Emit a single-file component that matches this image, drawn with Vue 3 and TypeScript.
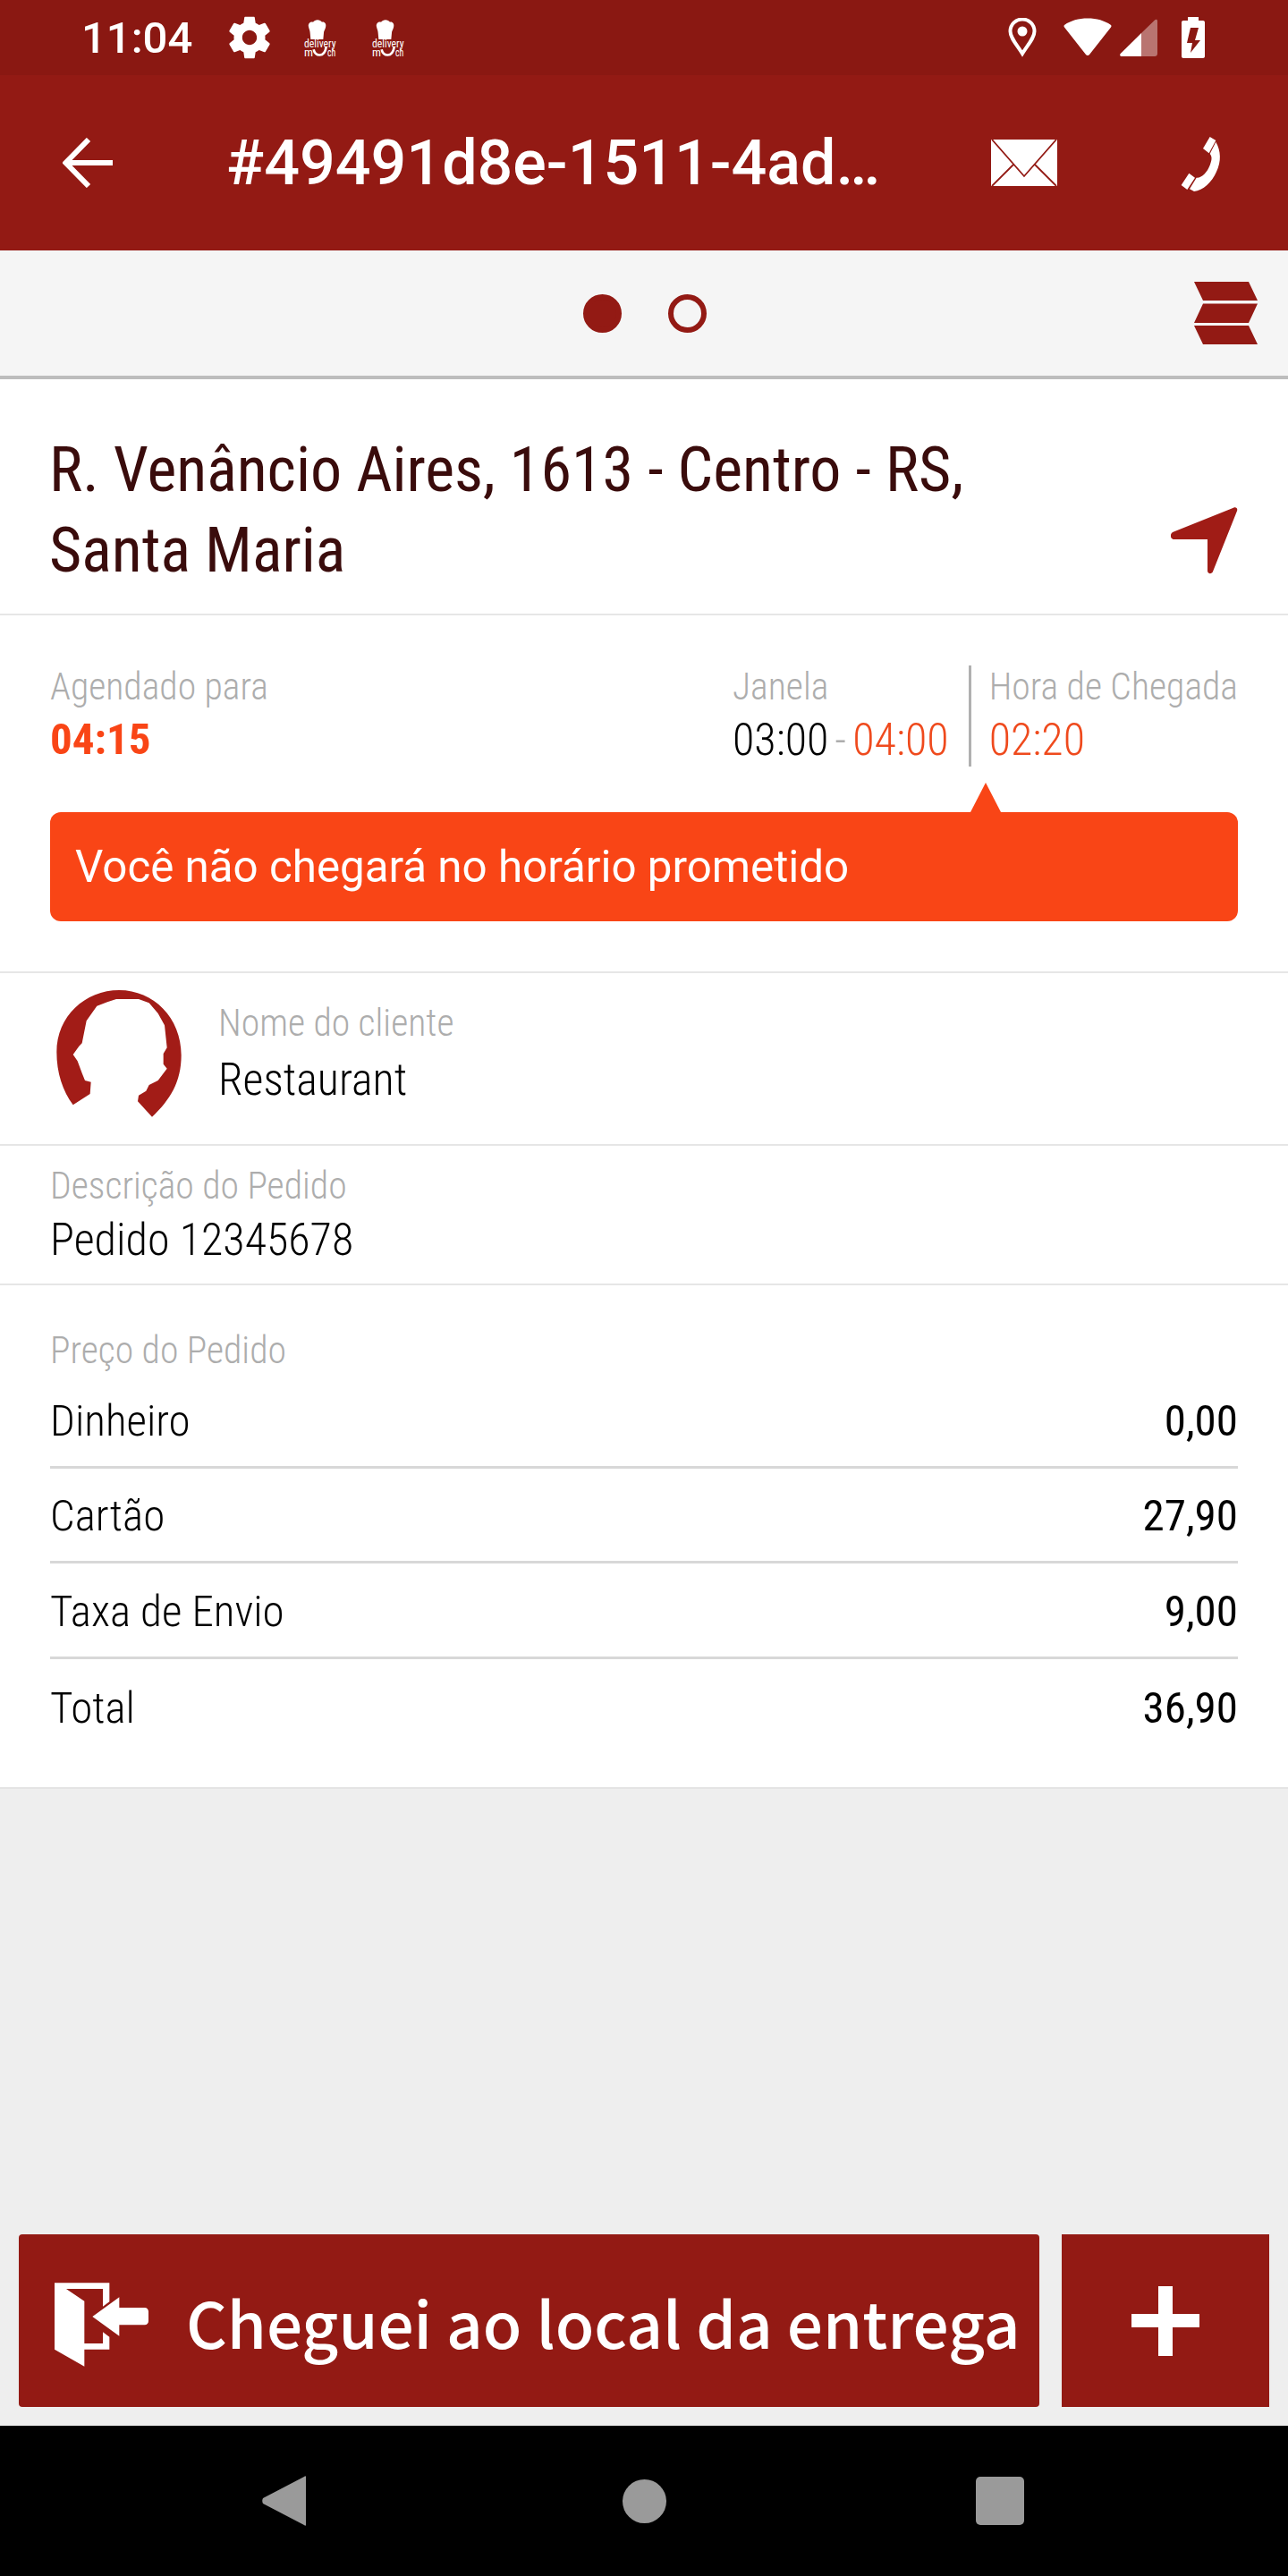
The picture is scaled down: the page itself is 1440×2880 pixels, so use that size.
<template>
  <div class="screen">
    <!-- status bar -->
    <div class="status">
      <span class="time">11:04</span>
      <svg class="gear" viewBox="0 0 24 24" width="56" height="56">
        <path fill="#fff" d="M19.43 12.98c.04-.32.07-.64.07-.98s-.03-.66-.07-.98l2.11-1.65c.19-.15.24-.42.12-.64l-2-3.46c-.12-.22-.39-.3-.61-.22l-2.49 1c-.52-.4-1.08-.73-1.69-.98l-.38-2.65C14.46 2.18 14.25 2 14 2h-4c-.25 0-.46.18-.49.42l-.38 2.65c-.61.25-1.17.59-1.69.98l-2.49-1c-.23-.09-.49 0-.61.22l-2 3.46c-.13.22-.07.49.12.64l2.11 1.65c-.04.32-.07.65-.07.98s.03.66.07.98l-2.11 1.65c-.19.15-.24.42-.12.64l2 3.46c.12.22.39.3.61.22l2.49-1c.52.4 1.08.73 1.69.98l.38 2.65c.03.24.24.42.49.42h4c.25 0 .46-.18.49-.42l.38-2.65c.61-.25 1.17-.59 1.69-.98l2.49 1c.23.09.49 0 .61-.22l2-3.46c.12-.22.07-.49-.12-.64l-2.11-1.65zM12 15.5c-1.93 0-3.5-1.57-3.5-3.5s1.57-3.5 3.5-3.5 3.5 1.57 3.5 3.5-1.57 3.5-3.5 3.5z"/>
      </svg>
      <svg v-for="n in 2" :key="n" class="dm" viewBox="0 0 180 168" width="60" height="56">
        <path fill="#fff" d="M45 48c-3-12 7-18 15-16 6-10 24-10 30 0 8-2 16 6 12 18-2 8-6 12-6 18l-2 22H52l-2-22c0-6-3-12-5-20z"/>
        <text x="30" y="118" textLength="107" lengthAdjust="spacingAndGlyphs" class="dm-text">delivery</text>
        <text x="30" y="146" textLength="30" lengthAdjust="spacingAndGlyphs" class="dm-text">m</text>
        <text x="108" y="146" textLength="28" lengthAdjust="spacingAndGlyphs" class="dm-text">ch</text>
        <path fill="none" stroke="#fff" stroke-width="8" d="M62 124c4 24 36 28 42-8"/>
      </svg>
      <div class="status-right">
        <svg viewBox="0 0 32 44" width="32" height="44">
          <path fill="none" stroke="#fff" stroke-width="4" d="M16 40C9 29 2.500 22 2.500 15a13.500 13.500 0 0 1 27 0c0 7-6.500 14-13.500 25z"/>
          <circle cx="16" cy="15" r="5.500" fill="#fff"/>
        </svg>
        <svg class="wifi" viewBox="0 0 54 44" width="54" height="44">
          <path fill="#fff" d="M25 41 1 10.500c-.8-1-.6-2 .3-2.700C8 3 17 .5 27 .5S46 3 52.700 7.800c.9.700 1.100 1.700.3 2.700L29 41c-1 1.400-3 1.400-4 0z"/>
        </svg>
        <svg class="signal" viewBox="0 0 42 42" width="42" height="42">
          <path fill="#fff" fill-opacity=".4" d="M39 1.500c1.300-1.400 3-.9 3 1V39c0 1.700-1.300 3-3 3H24V16z"/>
          <path fill="#fff" d="M24 16v26H2c-1.800 0-2.500-1.700-1.300-2.900z"/>
        </svg>
        <svg class="battery" viewBox="0 0 26 46" width="26" height="46">
          <path fill="#fff" fill-rule="evenodd" d="M7 0h12v4h5c1.100 0 2 .9 2 2v38c0 1.100-.9 2-2 2H2c-1.100 0-2-.9-2-2V6c0-1.100.9-2 2-2h5zM10 12h9l-4 14h6L10 40l2-11H6z"/>
        </svg>
      </div>
    </div>

    <!-- toolbar -->
    <div class="toolbar">
      <svg class="back" viewBox="0 0 56 56" width="56" height="56">
        <path fill="none" stroke="#fff" stroke-width="6" d="M56 28H4M29 2 3.500 28 29 54"/>
      </svg>
      <span class="title">#49491d8e-1511-4ad…</span>
      <svg class="mail" viewBox="0 0 74 52" width="74" height="52">
        <path fill="#fff" d="M0 0h74v52H0z"/>
        <path fill="none" stroke="#931a14" stroke-width="1.800" d="M1 0 37 41 73 0M1 52l24-24M73 52 49 28"/>
      </svg>
      <svg class="phone" viewBox="0 0 240 240" width="80" height="80">
        <path fill="#fff" d="M158 33l20 12-23 43-20-16zM88 155l20 15-26 40-20-15z"/>
        <path fill="#fff" d="M178 50c17 30 19 65 2 100-15 35-45 63-75 66l-15-8 23-38c17 2 37-20 45-42 8-20 7-30 0-38z"/>
      </svg>
    </div>

    <!-- pager -->
    <div class="pager">
      <span class="dot dot-on"></span>
      <span class="dot"></span>
      <svg class="stack" viewBox="0 0 71 70" width="71" height="70">
        <path fill="#931a14" d="M0 0h61l10 21H10zM10 24.500h61L61 46H0zM0 49h61l10 21H10z"/>
      </svg>
    </div>

    <div class="card">
      <div class="address">
        <div class="address-text cond">R. Venâncio Aires, 1613 - Centro - RS,<br />Santa Maria</div>
        <svg class="nav" viewBox="0 0 75 75" width="75" height="75">
          <path fill="#a01c16" d="M2 28 70 .7c3-1.200 5 .8 4 3.500L47 72c-1 3-6 3-6-1V36H4c-4 0-6-5-2-8z"/>
        </svg>
      </div>

      <div class="times">
        <div class="times-row">
          <div class="t-col">
            <div class="label cond">Agendado para</div>
            <div class="value-strong cond">04:15</div>
          </div>
          <div class="t-col window">
            <div class="label cond">Janela</div>
            <div class="value cond">03:00<span class="sep">-</span><span class="orange">04:00</span></div>
          </div>
          <div class="t-col arrival">
            <div class="label cond">Hora de Chegada</div>
            <div class="value orange cond">02:20</div>
          </div>
        </div>
        <div class="alert">
          <span class="alert-tip"></span>
          Você não chegará no horário prometido
        </div>
      </div>

      <div class="client">
        <svg class="avatar" viewBox="0 70 600 450" width="200" height="150">
          <path fill="#a21c17" d="M155 467C120 420 100 360 100 290 100 170 195 82 310 82c115 0 208 93 208 218 0 90-38 150-98 207l-48-52 3-20 25-15 10-20 30-15 30-40-12-15v-35l12-20-8-75-22-40-30-35-35-13h-75l-30 10-35 13-35 50-15 75-10 10-20 28 15 22 15 40 10 25 20 5-3 40z"/>
        </svg>
        <div class="client-text">
          <div class="label cond">Nome do cliente</div>
          <div class="value cond">Restaurant</div>
        </div>
      </div>

      <div class="desc">
        <div class="label cond">Descrição do Pedido</div>
        <div class="value cond">Pedido 12345678</div>
      </div>

      <div class="price">
        <div class="label cond">Preço do Pedido</div>
        <div v-for="r in rows" :key="r.name" class="price-row cond">
          <span>{{ r.name }}</span>
          <span class="amount">{{ r.value }}</span>
        </div>
      </div>
    </div>

    <div class="spacer"></div>

    <div class="actions">
      <div class="btn-main">
        <svg class="door" viewBox="0 0 390 390" width="130" height="130">
          <path fill="#fff" d="M33 67h184v63l-22 16V87H72l61 41v219L33 290zM195 232l22 16v42h-84v-20h62z"/>
          <path fill="#fff" d="M160 180l90-65v35h85c8 0 13 6 13 13v32c0 7-5 13-13 13h-85v37z"/>
        </svg>
        <span class="btn-text">Cheguei ao local da entrega</span>
      </div>
      <div class="btn-plus">
        <svg viewBox="0 0 76 78" width="76" height="78">
          <path fill="#fff" d="M30 0h16v31h30v15H46v32H30V46H0V31h30z"/>
        </svg>
      </div>
    </div>

    <div class="navbar">
      <svg viewBox="0 0 50 56" width="50" height="56">
        <path fill="#9a9a9a" d="M49 1v54c0 1-1 1-2 0L1 31c-1-2-1-4 0-6L47 1c1-1 2-1 2 0z"/>
      </svg>
      <span class="home"></span>
      <span class="square"></span>
    </div>
  </div>
</template>

<script setup lang="ts">
const rows = [
  { name: 'Dinheiro', value: '0,00' },
  { name: 'Cartão', value: '27,90' },
  { name: 'Taxa de Envio', value: '9,00' },
  { name: 'Total', value: '36,90' },
]
</script>

<style>
body {
  margin: 0;
}
</style>

<style scoped>
.screen {
  width: 1440px;
  height: 2880px;
  display: flex;
  flex-direction: column;
  background: #eeeeee;
  font-family: Roboto, "Liberation Sans", sans-serif;
  overflow: hidden;
}

.cond {
  font-family: "Roboto Condensed", Roboto, sans-serif;
  font-stretch: 75%;
}

.status {
  height: 84px;
  flex: none;
  background: #8a1812;
  display: flex;
  align-items: center;
  padding-left: 91px;
  padding-right: 93px;
  color: #fff;
}

.time {
  font-size: 49px;
  font-weight: 500;
  width: 160px;
}

.gear {
  margin-right: 23px;
}

.dm {
  margin-right: 16px;
  overflow: visible;
}

.dm-text {
  font-family: "Roboto Condensed", Roboto, sans-serif;
  font-stretch: 75%;
  font-size: 36px;
  fill: #fff;
}

.status-right {
  margin-left: auto;
  display: flex;
  align-items: center;
}

.wifi {
  margin-left: 30px;
}

.signal {
  margin-left: 9px;
}

.battery {
  margin-left: 27px;
}

.toolbar {
  height: 196px;
  flex: none;
  background: #931a14;
  display: flex;
  align-items: center;
  color: #fff;
  padding-left: 70px;
}

.title {
  font-size: 70px;
  font-weight: 500;
  margin-left: 127px;
  width: 855px;
  white-space: nowrap;
}

.mail {
  margin-right: 118px;
}

.pager {
  height: 140px;
  flex: none;
  background: #f5f5f5;
  border-bottom: 4px solid #bdbdbd;
  display: flex;
  align-items: center;
  justify-content: center;
  gap: 52px;
  position: relative;
  padding-left: 2px;
}

.dot {
  width: 43px;
  height: 43px;
  box-sizing: border-box;
  border-radius: 50%;
  border: 6px solid #931a14;
}

.dot-on {
  background: #931a14;
}

.stack {
  position: absolute;
  right: 34px;
  top: 35px;
}

.card {
  background: #fff;
  border-bottom: 2px solid #e4e4e4;
  flex: none;
  height: 1576px;
  box-sizing: border-box;
}

.address {
  height: 264px;
  box-sizing: border-box;
  border-bottom: 2px solid #e6e6e6;
  padding: 56px 56px 44px 55px;
  display: flex;
  justify-content: space-between;
  align-items: flex-end;
}

.address-text {
  align-self: flex-start;
  font-size: 70px;
  line-height: 90px;
  color: #3a0c0c;
}

.times {
  height: 400px;
  box-sizing: border-box;
  border-bottom: 2px solid #e6e6e6;
  padding: 56px 56px 0;
}

.times-row {
  display: flex;
  height: 113px;
}

.t-col {
  display: flex;
  flex-direction: column;
}

.t-col .label {
  margin-top: -5px;
  line-height: 58px;
}

.window {
  margin-left: auto;
  padding-right: 22px;
  border-right: 3px solid #b0b0b0;
}

.arrival {
  padding-left: 20px;
}

.label {
  font-size: 41.7px;
  font-weight: 300;
  line-height: 54px;
  color: #adadad;
}

.value {
  font-size: 50px;
  font-weight: 300;
  line-height: 60px;
  color: #000;
}

.value-strong {
  font-size: 49px;
  font-weight: 700;
  line-height: 60px;
  color: #f94516;
}

.orange {
  color: #ef4a1d;
}

.value.orange {
  color: #ef4a1d;
}

.sep {
  color: #adadad;
  margin: 0 7px;
}

.alert {
  margin-top: 51px;
  height: 122px;
  border-radius: 12px;
  background: #f94516;
  color: #fff;
  font-size: 49.3px;
  display: flex;
  align-items: center;
  padding-left: 28px;
  position: relative;
}

.alert-tip {
  position: absolute;
  top: -33px;
  left: 1029px;
  width: 0;
  height: 0;
  border-left: 17px solid transparent;
  border-right: 17px solid transparent;
  border-bottom: 33px solid #f94516;
}

.client {
  height: 193px;
  box-sizing: border-box;
  border-bottom: 2px solid #e6e6e6;
  display: flex;
  align-items: flex-start;
  padding: 15px 0 0 30px;
  gap: 14px;
}

.client-text {
  padding-top: 11px;
}

.client-text .label {
  line-height: 60px;
}

.client-text .value {
  margin-top: 3px;
}

.desc {
  height: 156px;
  box-sizing: border-box;
  border-bottom: 2px solid #e6e6e6;
  padding: 15px 56px 0;
}

.desc .label {
  line-height: 60px;
}

.price {
  padding: 48px 56px 0;
}

.price .label {
  line-height: 50px;
}

.price-row {
  display: flex;
  justify-content: space-between;
  align-items: center;
  height: 106.5px;
  box-sizing: border-box;
  padding-top: 3px;
  font-size: 49px;
  font-weight: 300;
  color: #000;
  border-bottom: 3px solid #d8d8d8;
}

.price-row:last-child {
  border-bottom: none;
}

.amount {
  font-weight: 400;
}

.spacer {
  flex: 1;
}

.actions {
  display: flex;
  justify-content: space-between;
  padding: 0 21px;
  height: 193px;
  flex: none;
  margin-bottom: 21px;
}

.btn-main {
  width: 1141px;
  border-radius: 4px;
  background: #931a14;
  display: flex;
  align-items: center;
  padding-left: 29px;
  box-sizing: border-box;
}

.door {
  margin-right: 28px;
  flex: none;
}

.btn-text {
  font-family: "Noto Sans CJK SC", "Noto Sans", sans-serif;
  font-size: 71px;
  font-weight: 500;
  color: #fff;
  white-space: nowrap;
}

.btn-plus {
  width: 232px;
  background: #931a14;
  display: flex;
  align-items: center;
  justify-content: center;
}

.navbar {
  height: 168px;
  flex: none;
  background: #000;
  display: flex;
  align-items: center;
  padding-left: 293px;
}

.home {
  width: 49px;
  height: 49px;
  border-radius: 50%;
  background: #9a9a9a;
  margin-left: 353px;
}

.square {
  width: 54px;
  height: 54px;
  border-radius: 5px;
  background: #9a9a9a;
  margin-left: 346px;
}
</style>
